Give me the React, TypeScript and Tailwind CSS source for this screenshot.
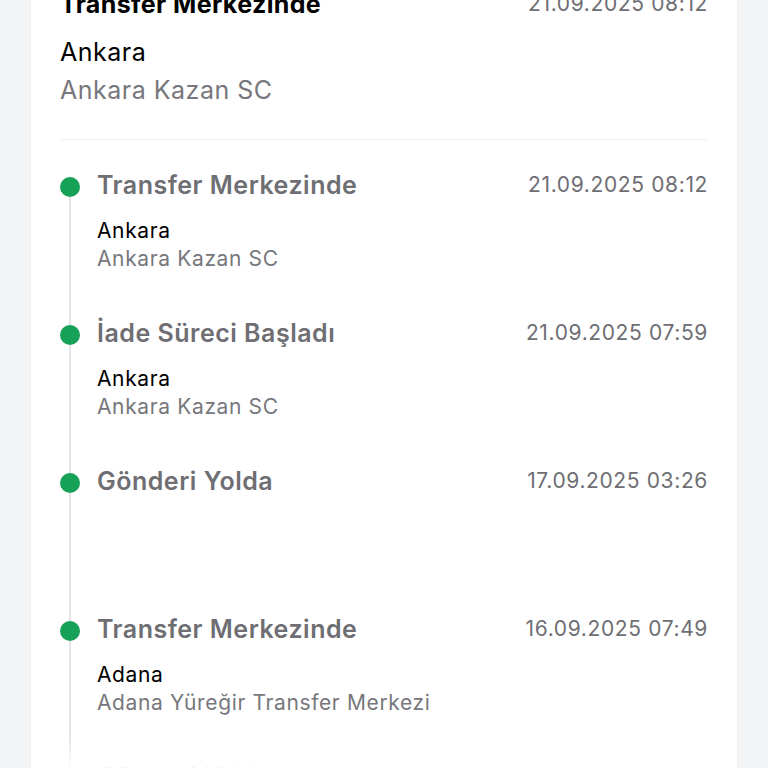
type Step = {
  title: string;
  date: string;
  city?: string;
  place?: string;
};

const steps: Step[] = [
  { title: "Transfer Merkezinde", date: "21.09.2025 08:12", city: "Ankara", place: "Ankara Kazan SC" },
  { title: "İade Süreci Başladı", date: "21.09.2025 07:59", city: "Ankara", place: "Ankara Kazan SC" },
  { title: "Gönderi Yolda", date: "17.09.2025 03:26" },
  { title: "Transfer Merkezinde", date: "16.09.2025 07:49", city: "Adana", place: "Adana Yüreğir Transfer Merkezi" },
  { title: "Gönderi Yolda", date: "15.09.2025 22:10" },
];

function TimelineItem({ step, first }: { step: Step; first: boolean }) {
  return (
    <div className="flex h-[148px]">
      <div className="flex w-5 flex-col items-center">
        <div className={first ? "h-2 w-0.5" : "h-2 w-0.5 bg-[#e4e4e7]"} />
        <div className="h-5 w-5 rounded-full bg-[#17a057]" />
        <div className="w-0.5 flex-1 bg-[#e4e4e7]" />
      </div>
      <div className="ml-[17px] flex-1">
        <div className="flex items-center justify-between">
          <h3 className="text-[25px] leading-8 font-semibold tracking-[0.02em] text-[#6e6e73]">{step.title}</h3>
          <span className="text-[21px] leading-8 tracking-[0.03em] text-[#6e6e73]">{step.date}</span>
        </div>
        {step.city && (
          <div className="mt-4 text-[21px] leading-7 tracking-[0.03em]">
            <p className="text-black">{step.city}</p>
            <p className="text-[#77777c]">{step.place}</p>
          </div>
        )}
      </div>
    </div>
  );
}

export default function App() {
  return (
    <div
      className="relative h-screen overflow-hidden bg-[#f3f4f6]"
      style={{ fontFamily: "Inter, 'Noto Sans', sans-serif" }}
    >
      <div className="mx-[31px] mt-[-42px] bg-white pt-[30px] pr-[29px] pl-[29px] shadow-[0_0_2px_rgba(0,0,0,0.06)]">
        <div className="flex items-center justify-between">
          <h2 className="text-[25px] leading-8 font-bold tracking-[0.015em] text-black">Transfer Merkezinde</h2>
          <span className="text-[21px] leading-8 tracking-[0.03em] text-[#6e6e73]">21.09.2025 08:12</span>
        </div>
        <div className="mt-[13px] text-[25px] leading-[38px] tracking-[0.02em]">
          <p className="text-black">Ankara</p>
          <p className="text-[#77777c]">Ankara Kazan SC</p>
        </div>
        <div className="mt-[30px] h-px bg-[#f0f0f2]" />
        <div className="mt-[29px]">
          {steps.map((s, i) => (
            <TimelineItem key={i} step={s} first={i === 0} />
          ))}
        </div>
      </div>
      <div className="pointer-events-none absolute inset-x-[31px] bottom-0 h-8 bg-gradient-to-b from-white/0 to-white/95" />
    </div>
  );
}
